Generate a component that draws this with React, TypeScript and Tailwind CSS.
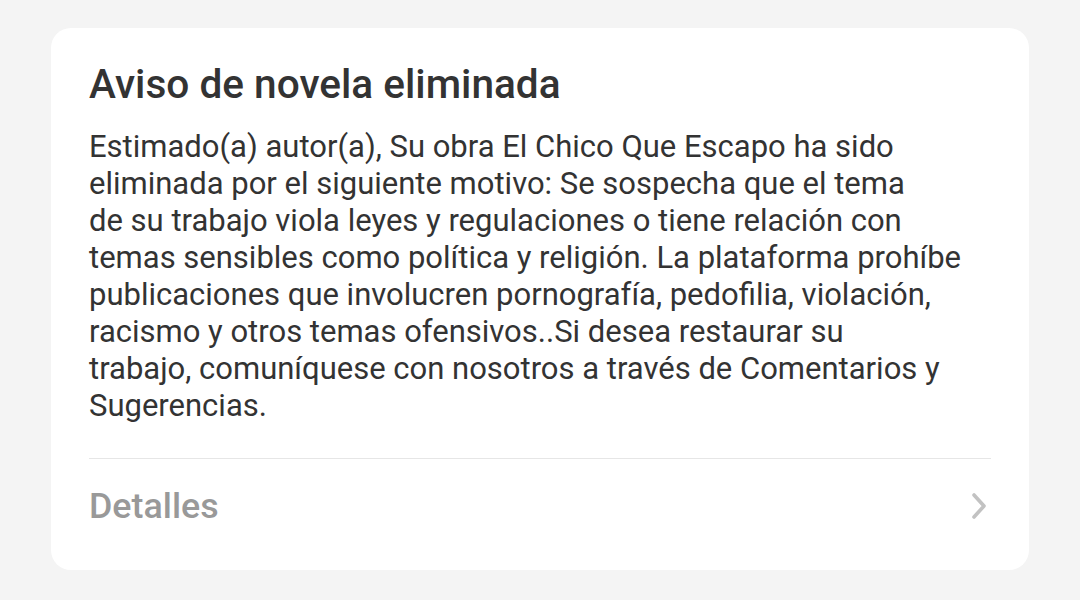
import React from "react";

const lines = [
  "Estimado(a) autor(a), Su obra El Chico Que Escapo ha sido",
  "eliminada por el siguiente motivo: Se sospecha que el tema",
  "de su trabajo viola leyes y regulaciones o tiene relación con",
  "temas sensibles como política y religión. La plataforma prohíbe",
  "publicaciones que involucren pornografía, pedofilia, violación,",
  "racismo y otros temas ofensivos..Si desea restaurar su",
  "trabajo, comuníquese con nosotros a través de Comentarios y",
  "Sugerencias.",
];

export default function App() {
  return (
    <div className="w-[1080px] h-[600px] bg-[#f4f4f4] pt-[28px] pl-[51px]" style={{ fontFamily: "Roboto, 'Noto Sans', sans-serif" }}>
      <div className="w-[978px] h-[542px] bg-white rounded-[20px] px-[38px] pt-[32px]">
        <h1 className="text-[40.6px] leading-[48px] font-medium text-[#333333]">Aviso de novela eliminada</h1>
        <div className="mt-[20px] text-[31px] leading-[37px] text-[#333333]">
          {lines.map((l, i) => (
            <div key={i} className="whitespace-nowrap">{l}</div>
          ))}
        </div>
        <div className="mt-[34px] h-px bg-[#e6e6e6]" />
        <div className="flex items-center justify-between h-[96px]">
          <span className="text-[35.8px] font-medium text-[#999999]">Detalles</span>
          <svg width="22" height="32" viewBox="0 0 22 32" className="mr-[1px]">
            <path d="M6 4 L16 15 L6 26" fill="none" stroke="#c2c2c2" strokeWidth="3.6" strokeLinecap="round" strokeLinejoin="round" />
          </svg>
        </div>
      </div>
    </div>
  );
}
